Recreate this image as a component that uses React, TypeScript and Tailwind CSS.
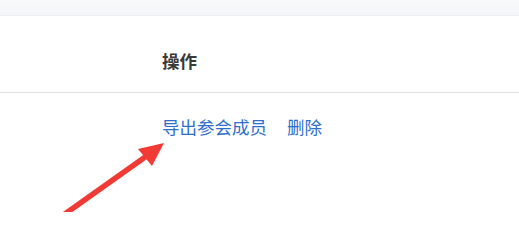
import React from "react";

const font = { fontFamily: '"Noto Sans CJK SC", "Microsoft YaHei", sans-serif' };

function Arrow() {
  return (
    <svg
      className="absolute left-0 top-0 pointer-events-none"
      width="519"
      height="212"
      viewBox="0 0 519 212"
    >
      <line x1="62" y1="216" x2="148" y2="155" stroke="#f23a35" strokeWidth="5.5" strokeLinecap="round" />
      <polygon points="164,143 138,149 152,166" fill="#f23a35" />
    </svg>
  );
}

export default function App() {
  return (
    <div className="relative w-[519px] h-[212px] overflow-hidden bg-white" style={font}>
      <div className="h-4 bg-gradient-to-b from-[#f8f9fb] to-[#f3f5f8] border-b border-[#eceef1]" />
      <div className="h-[77px] flex items-center pt-[13px] pl-[162px] border-b border-[#e3e3e3]">
        <span className="text-[17.5px] font-bold text-[#3a3a3a] leading-none">操作</span>
      </div>
      <div className="flex items-center gap-5 pl-[162px] pt-[25px]">
        <span className="text-[17.5px] text-[#2f6fcc] leading-none">导出参会成员</span>
        <span className="text-[17.5px] text-[#2f6fcc] leading-none">删除</span>
      </div>
      <Arrow />
    </div>
  );
}
